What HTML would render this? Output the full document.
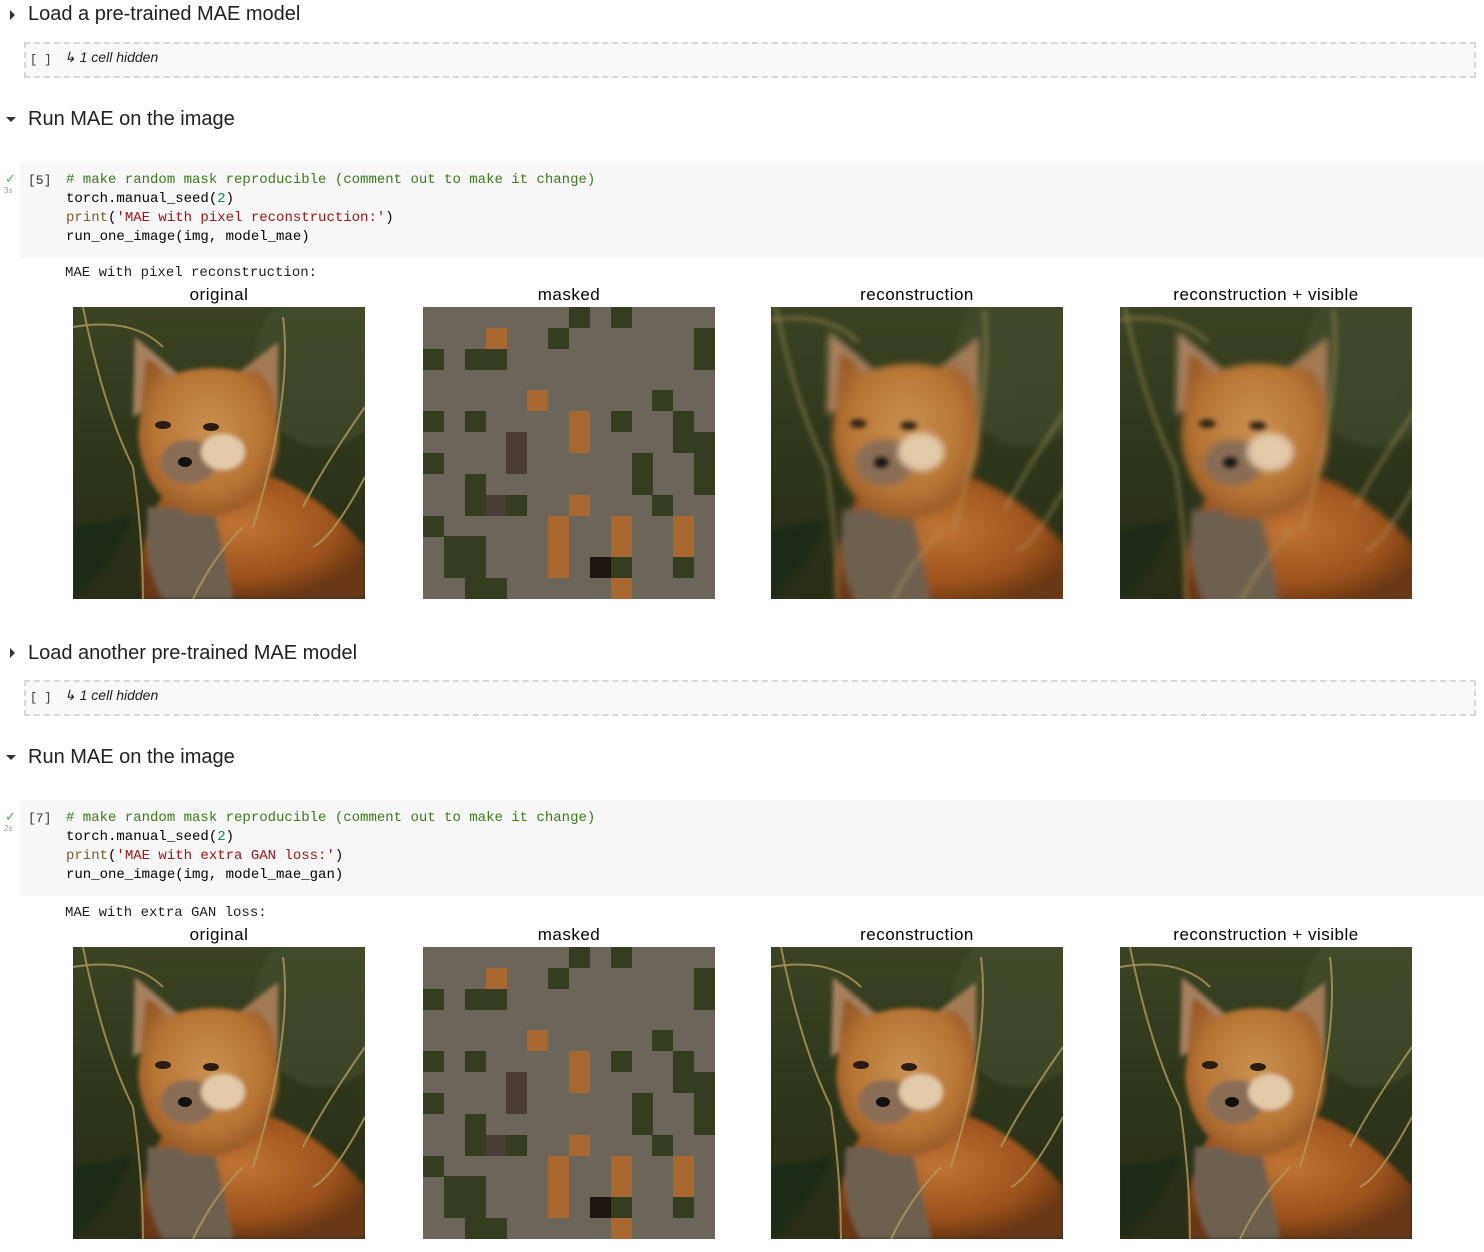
<!DOCTYPE html>
<html><head><meta charset="utf-8">
<style>
body{margin:0;background:#fff;width:1484px;height:1252px;position:relative;overflow:hidden;font-family:"Liberation Sans",sans-serif;color:#212121}
.abs{position:absolute}
.h{font-size:20px;left:28px}
.tri{position:absolute;left:10px;width:0;height:0}
.tr{border-top:5px solid transparent;border-bottom:5px solid transparent;border-left:5px solid #333}
.td{border-left:5px solid transparent;border-right:5px solid transparent;border-top:5px solid #333;left:6px}
.hid{left:24px;width:1448px;height:32px;border:2px dashed #d8d8d8;background:#f9f9f9}
.hid .b{position:absolute;left:4px;top:9px;font-family:"Liberation Mono",monospace;font-size:12px;color:#333}
.hid .t{position:absolute;left:38px;top:5px;font-style:italic;font-size:14px;color:#212121}
.code{left:20px;width:1464px;height:96px;background:#f7f7f7}
pre{margin:0;font-family:"Liberation Mono",monospace;font-size:14px;line-height:19px;color:#000}
.cm{color:#3b7a1a}.st{color:#a31515}.nm{color:#09885a}.fn{color:#795e26}
.num{font-family:"Liberation Mono",monospace;font-size:13px;color:#333;left:28px}
.chk{left:5px;color:#4caf50;font-size:13px}
.sec{left:4px;font-size:8px;color:#999}
.out{left:65px;font-family:"Liberation Mono",monospace;font-size:14px}
.ttl{font-size:17px;width:292px;text-align:center;color:#000;letter-spacing:0.5px}
.img{width:292px;height:292px;overflow:hidden;background:#2f3719}
.img svg{display:block}
.blur svg{filter:blur(2.5px);transform:scale(1.05)}
.msk{background:#6b6659}
.msk i{position:absolute;width:21px;height:21px}
</style></head><body>
<svg width="0" height="0" style="position:absolute">
<defs>
<linearGradient id="bg" x1="0" y1="0" x2="0" y2="1"><stop offset="0" stop-color="#3a4322"/><stop offset=".6" stop-color="#2c3419"/><stop offset="1" stop-color="#2a2d17"/></linearGradient>
<radialGradient id="hd" cx=".5" cy=".45" r=".55"><stop offset="0" stop-color="#c99050"/><stop offset=".7" stop-color="#b77534"/><stop offset="1" stop-color="#9a5c28"/></radialGradient>
<radialGradient id="bd" cx=".45" cy=".4" r=".6"><stop offset="0" stop-color="#c07535"/><stop offset=".7" stop-color="#9c521c"/><stop offset="1" stop-color="#6a3814"/></radialGradient>
<filter id="sf"><feGaussianBlur stdDeviation="2"/></filter>
<symbol id="fox" viewBox="0 0 292 292">
<rect width="292" height="292" fill="url(#bg)"/>
<ellipse cx="250" cy="60" rx="70" ry="80" fill="#4a5230" opacity=".5" filter="url(#sf)"/>
<g filter="url(#sf)">
<path d="M100 170 Q60 230 70 292 L292 292 L292 240 Q250 190 200 170 Z" fill="url(#bd)"/>
<path d="M75 200 Q70 260 90 292 L160 292 Q150 240 140 200 Z" fill="#6e6050"/>
<path d="M62 30 L60 110 L115 75 Z" fill="#a6805e"/>
<path d="M205 35 L160 70 L205 110 Z" fill="#a27a55"/>
<path d="M72 60 Q70 40 95 70 Q130 55 170 65 Q200 55 205 120 Q210 170 170 200 Q140 215 110 205 Q70 185 65 130 Z" fill="url(#hd)"/>
<ellipse cx="115" cy="155" rx="28" ry="22" fill="#8a6d55"/>
<ellipse cx="150" cy="145" rx="22" ry="18" fill="#e2c9a8"/>
<path d="M60 210 Q40 260 0 292 L0 220 Z" fill="#1f2a12"/>
</g>
<ellipse cx="90" cy="118" rx="8" ry="4" fill="#2a1c10"/>
<ellipse cx="138" cy="120" rx="8" ry="4" fill="#2a1c10"/>
<ellipse cx="112" cy="155" rx="7" ry="5" fill="#111"/>
<path d="M0 20 Q60 10 90 40 M10 0 Q30 100 60 160 Q70 230 70 292 M210 10 Q220 90 180 220 M292 100 Q250 160 230 200 M292 170 Q260 230 240 240 M120 292 Q140 250 170 220" stroke="#b49a5e" stroke-width="2" fill="none" opacity=".8"/>
</symbol>
</defs></svg>

<div class="tri tr" style="top:10px"></div>
<div class="abs h" style="top:3px">Load a pre-trained MAE model</div>
<div class="abs hid" style="top:42px"><span class="b">[ ]</span><span class="t">↳ 1 cell hidden</span></div>

<div class="tri td" style="top:117px"></div>
<div class="abs h" style="top:108px">Run MAE on the image</div>

<div class="abs code" style="top:162px"></div>
<div class="abs chk" style="top:171px">✓</div>
<div class="abs sec" style="top:186px">3s</div>
<div class="abs num" style="top:173px">[5]</div>
<pre class="abs" style="left:66px;top:171px"><span class="cm"># make random mask reproducible (comment out to make it change)</span>
torch.manual_seed(<span class="nm">2</span>)
<span class="fn">print</span>(<span class="st">'MAE with pixel reconstruction:'</span>)
run_one_image(img, model_mae)</pre>
<div class="abs out" style="top:265px">MAE with pixel reconstruction:</div>

<div class="abs ttl" style="left:73px;top:285px">original</div>
<div class="abs ttl" style="left:423px;top:285px">masked</div>
<div class="abs ttl" style="left:771px;top:285px">reconstruction</div>
<div class="abs ttl" style="left:1120px;top:285px">reconstruction + visible</div>
<div class="abs img" style="left:73px;top:307px"><svg width="292" height="292"><use href="#fox"/></svg></div>
<div class="abs img msk" style="left:423px;top:307px"></div>
<div class="abs img blur" style="left:771px;top:307px"><svg width="292" height="292"><use href="#fox"/></svg></div>
<div class="abs img blur" style="left:1120px;top:307px"><svg width="292" height="292"><use href="#fox"/></svg></div>

<div class="tri tr" style="top:648px"></div>
<div class="abs h" style="top:642px">Load another pre-trained MAE model</div>
<div class="abs hid" style="top:680px"><span class="b">[ ]</span><span class="t">↳ 1 cell hidden</span></div>

<div class="tri td" style="top:755px"></div>
<div class="abs h" style="top:746px">Run MAE on the image</div>

<div class="abs code" style="top:800px"></div>
<div class="abs chk" style="top:809px">✓</div>
<div class="abs sec" style="top:824px">2s</div>
<div class="abs num" style="top:811px">[7]</div>
<pre class="abs" style="left:66px;top:809px"><span class="cm"># make random mask reproducible (comment out to make it change)</span>
torch.manual_seed(<span class="nm">2</span>)
<span class="fn">print</span>(<span class="st">'MAE with extra GAN loss:'</span>)
run_one_image(img, model_mae_gan)</pre>
<div class="abs out" style="top:905px">MAE with extra GAN loss:</div>

<div class="abs ttl" style="left:73px;top:925px">original</div>
<div class="abs ttl" style="left:423px;top:925px">masked</div>
<div class="abs ttl" style="left:771px;top:925px">reconstruction</div>
<div class="abs ttl" style="left:1120px;top:925px">reconstruction + visible</div>
<div class="abs img" style="left:73px;top:947px"><svg width="292" height="292"><use href="#fox"/></svg></div>
<div class="abs img msk" style="left:423px;top:947px"></div>
<div class="abs img" style="left:771px;top:947px"><svg width="292" height="292"><use href="#fox"/></svg></div>
<div class="abs img" style="left:1120px;top:947px"><svg width="292" height="292"><use href="#fox"/></svg></div>

<script>
var cells={0:[7,9],1:[3,6,13],2:[0,2,3,13],4:[5,11],5:[0,2,7,9,12],6:[4,7,12,13],7:[0,4,10,13],8:[2,10,13],9:[2,3,4,7,11],10:[0,6,9,12],11:[1,2,6,9,12],12:[1,2,6,8,9,12],13:[2,3,9]};
var orange={"1,3":1,"4,5":1,"5,7":1,"6,7":1,"9,7":1,"10,6":1,"11,6":1,"10,9":1,"11,9":1,"10,12":1,"11,12":1,"12,6":1,"13,9":1,"9,3":1,"6,4":1,"7,4":1};
document.querySelectorAll('.msk').forEach(function(m){
 for(var r in cells){cells[r].forEach(function(c){
  var i=document.createElement('i');
  i.style.left=(c*20.86)+'px';i.style.top=(r*20.86)+'px';
  var k=r+','+c;
  i.style.background=orange[k]?(k=="6,4"||k=="7,4"||k=="9,3"?'#4a3e34':'#a8682f'):(k=="12,8"?'#1e160f':'#343d20');
  m.appendChild(i);});}
});
</script>
</body></html>
